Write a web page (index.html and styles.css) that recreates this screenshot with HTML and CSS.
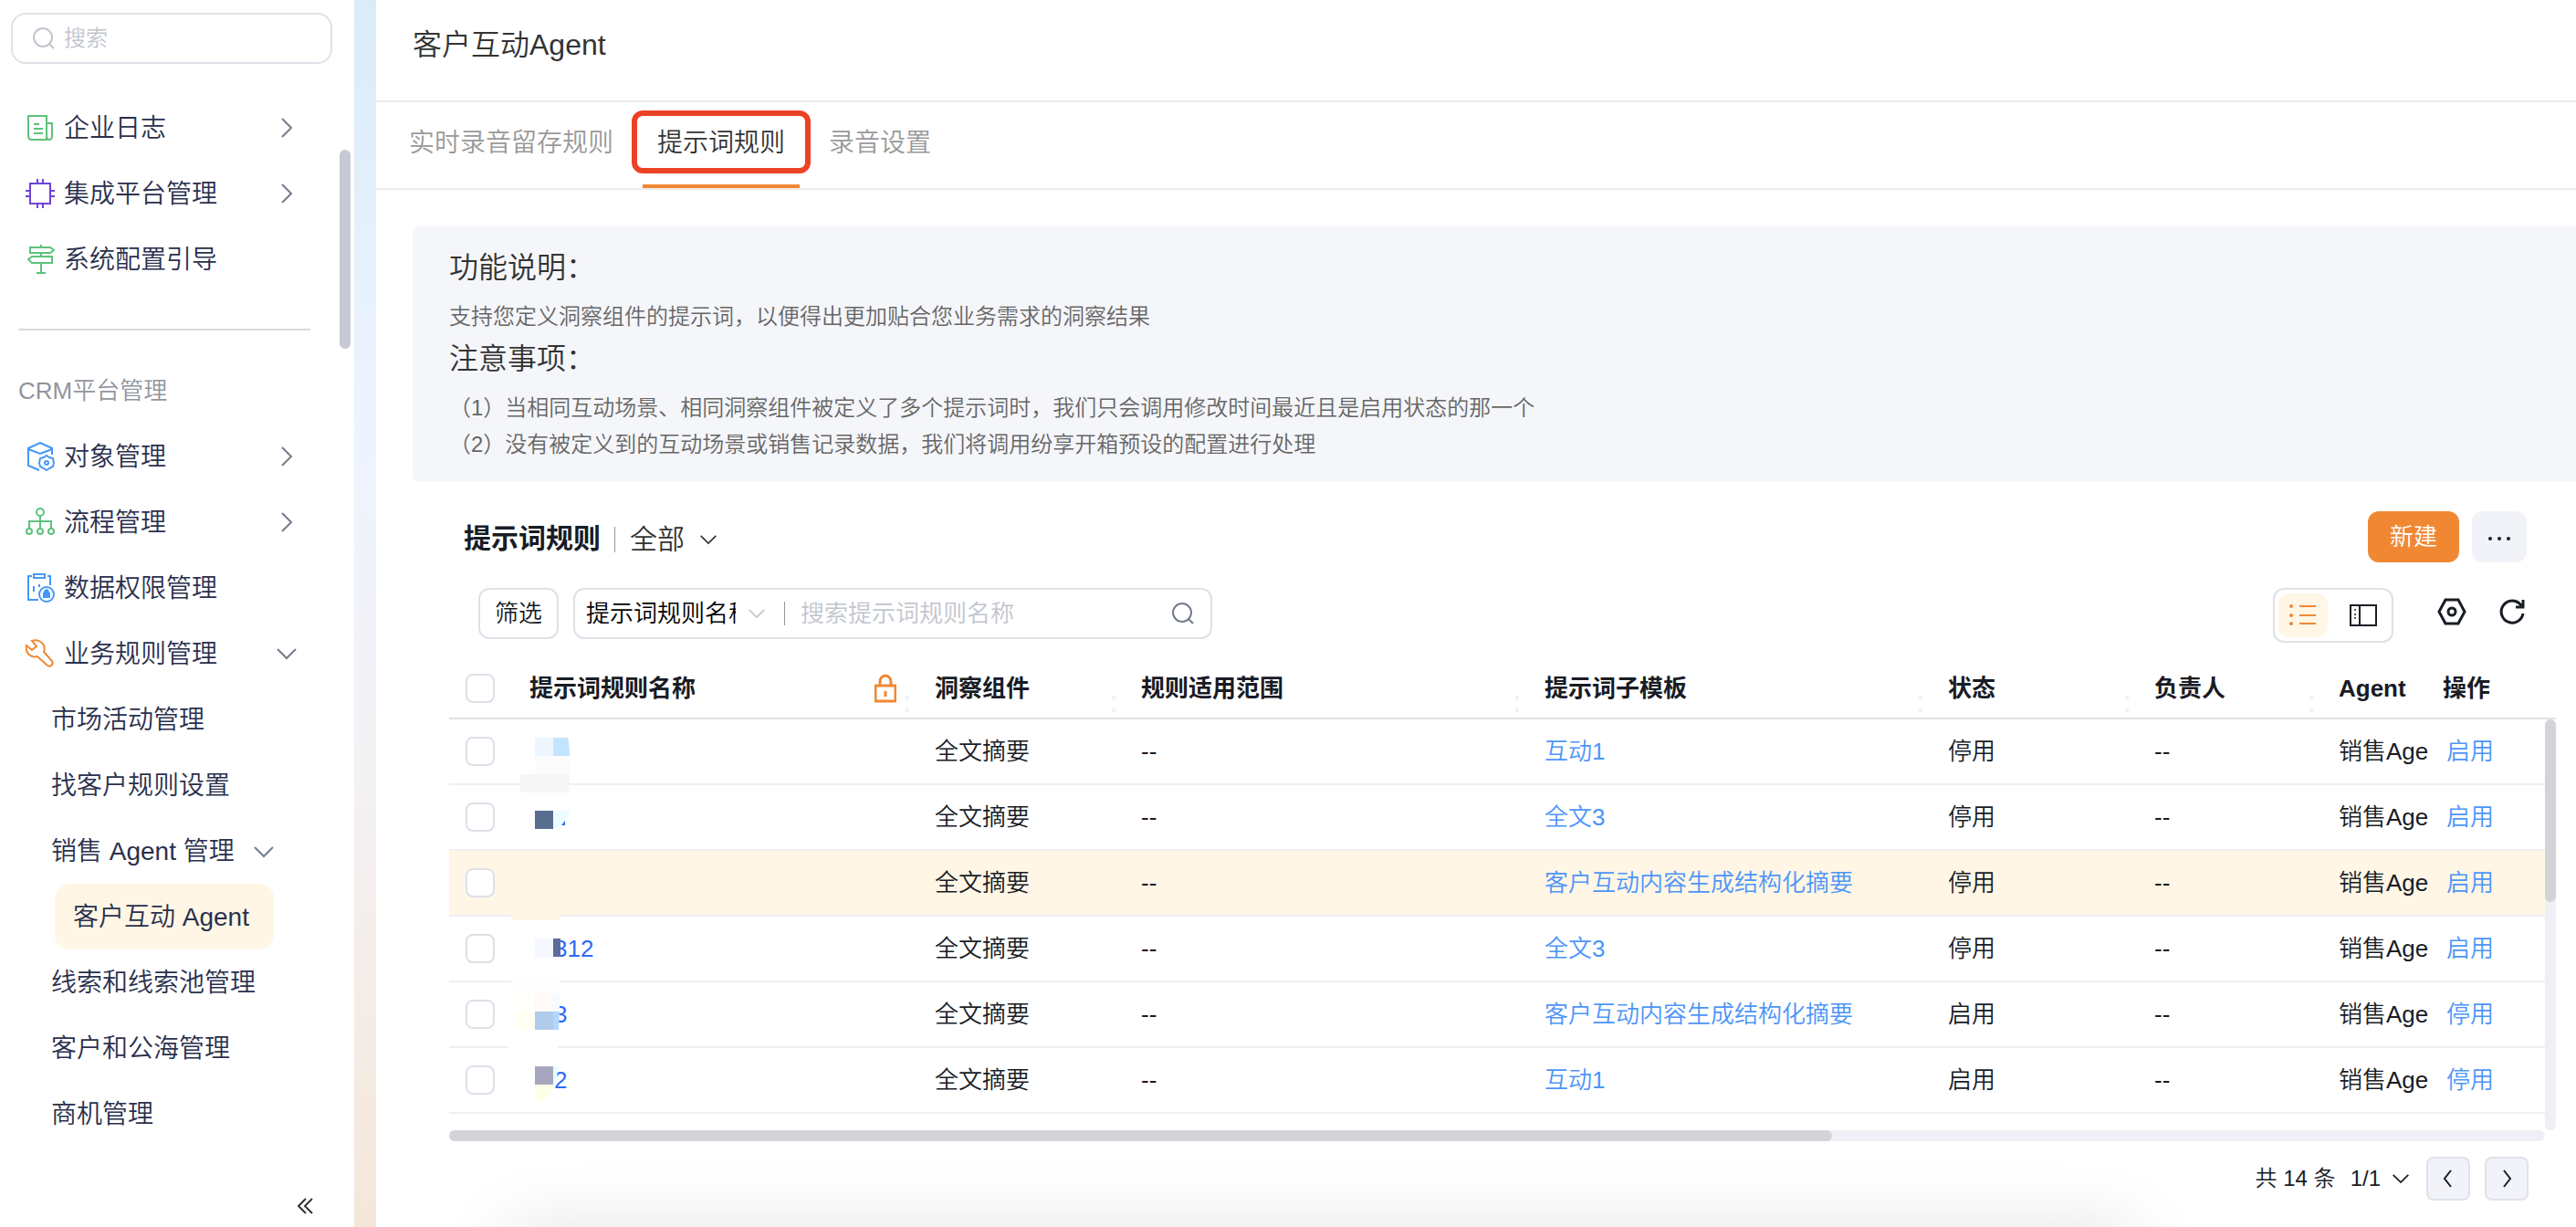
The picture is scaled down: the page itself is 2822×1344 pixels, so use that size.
FILE: index.html
```html
<!DOCTYPE html>
<html lang="zh-CN">
<head>
<meta charset="utf-8">
<meta name="viewport" content="width=device-width, initial-scale=1">
<title>客户互动Agent</title>
<link rel="stylesheet" href="styles.css">
</head>
<body>
<svg class="sprite" aria-hidden="true">
  <symbol id="i-right" viewBox="0 0 24 24"><path d="M7 2l10 10L7 22"/></symbol>
  <symbol id="i-down" viewBox="0 0 24 24"><path d="M2 7l10 10L22 7"/></symbol>
  <symbol id="i-search" viewBox="0 0 24 24"><circle cx="11" cy="11" r="10"/><path d="M18 18l5 5"/></symbol>
</svg>

<aside class="sidebar">
  <label class="side-search">
    <svg class="icon-24"><use href="#i-search"/></svg>
    <input type="search" placeholder="搜索" aria-label="搜索">
  </label>
  <nav class="menu">
    <a class="item" href="#">
      <svg class="menu-icon green" viewBox="0 0 32 32"><path d="M3 3h20v26H7q-4 0-4-4zM23 11h6v14q0 4-3 4t-3-4zM9 12h6M9 17h10M9 22h10"/></svg>
      <span>企业日志</span><svg class="arrow"><use href="#i-right"/></svg>
    </a>
    <a class="item" href="#">
      <svg class="menu-icon purple" viewBox="0 0 32 32"><path d="M5 5h22v22H5zM13 0v5M19 0v5M13 27v5M19 27v5M0 13h5M0 19h5M27 13h5M27 19h5"/></svg>
      <span>集成平台管理</span><svg class="arrow"><use href="#i-right"/></svg>
    </a>
    <a class="item" href="#">
      <svg class="menu-icon green" viewBox="0 0 32 32"><path d="M17 0v3M5 3h22l4 3-4 3H5zM17 9v4M29 13H7l-4 3 4 4h22zM17 20v11M12 31h10"/></svg>
      <span>系统配置引导</span>
    </a>
    <hr>
    <h2>CRM平台管理</h2>
    <a class="item" href="#">
      <svg class="menu-icon blue" viewBox="0 0 32 32"><path d="M29 14V7L16 1 3 7v19l12 5M3 8l13 5 13-5"/><path d="M23 15l3 2 4 1 1 5-1 4-4 2-3 2-3-2-4-2-1-4 1-5 4-1z"/><circle cx="23" cy="23" r="2"/></svg>
      <span>对象管理</span><svg class="arrow"><use href="#i-right"/></svg>
    </a>
    <a class="item" href="#">
      <svg class="menu-icon green" viewBox="0 0 32 32"><circle cx="16" cy="5" r="4"/><circle cx="4" cy="26" r="3"/><circle cx="16" cy="26" r="3"/><circle cx="28" cy="26" r="3"/><path d="M16 9v14M4 23v-8h24v8"/></svg>
      <span>流程管理</span><svg class="arrow"><use href="#i-right"/></svg>
    </a>
    <a class="item" href="#">
      <svg class="menu-icon blue" viewBox="0 0 32 32"><path d="M7 3H3v26h11M24 3h3v10M9 1h12v4H9zM9 14v6M15 12v3"/><circle cx="23" cy="23" r="8"/><path class="solid" d="M19 21h1c0-5 6-5 6 0h1v6h-8z"/></svg>
      <span>数据权限管理</span>
    </a>
    <a class="item" href="#">
      <svg class="menu-icon orange" viewBox="0 0 32 32"><path d="M7 2c8-3 16 4 13 12l9 10c2 4-2 7-5 5L13 19C6 21-1 15 1 7l6 5 5-4z"/></svg>
      <span>业务规则管理</span><svg class="arrow"><use href="#i-down"/></svg>
    </a>
    <a class="item sub" href="#">市场活动管理</a>
    <a class="item sub" href="#">找客户规则设置</a>
    <a class="item sub" href="#">销售 Agent 管理<svg class="arrow near"><use href="#i-down"/></svg></a>
    <a class="item current" href="#" aria-current="page">客户互动 Agent</a>
    <a class="item sub" href="#">线索和线索池管理</a>
    <a class="item sub" href="#">客户和公海管理</a>
    <a class="item sub" href="#">商机管理</a>
  </nav>
  <button class="collapse" type="button" aria-label="收起"><svg viewBox="0 0 18 18"><path d="M9 1L1 9l8 8M16 1L8 9l8 8"/></svg></button>
  <div class="side-thumb"></div>
</aside>
<div class="gutter"></div>

<main>
  <header class="title"><h1>客户互动Agent</h1></header>
  <nav class="tabs">
    <a href="#">实时录音留存规则</a>
    <a class="selected" href="#">提示词规则</a>
    <a href="#">录音设置</a>
  </nav>

  <section class="notice">
    <h3>功能说明：</h3>
    <p>支持您定义洞察组件的提示词，以便得出更加贴合您业务需求的洞察结果</p>
    <h3>注意事项：</h3>
    <p>（1）当相同互动场景、相同洞察组件被定义了多个提示词时，我们只会调用修改时间最近且是启用状态的那一个</p>
    <p>（2）没有被定义到的互动场景或销售记录数据，我们将调用纷享开箱预设的配置进行处理</p>
  </section>

  <section class="list">
    <div class="list-head">
      <h2>提示词规则</h2>
      <button class="view-pick" type="button">全部<svg class="icon-20"><use href="#i-down"/></svg></button>
      <div class="actions">
        <button class="primary" type="button">新建</button>
        <button class="more" type="button" aria-label="更多"><svg viewBox="0 0 24 4"><circle cx="2" cy="2" r="2"/><circle cx="12" cy="2" r="2"/><circle cx="22" cy="2" r="2"/></svg></button>
      </div>
    </div>

    <div class="toolbar">
      <button class="filter" type="button">筛选</button>
      <div class="search">
        <select aria-label="搜索字段"><option>提示词规则名称</option></select>
        <svg class="icon-20 pale"><use href="#i-down"/></svg>
        <input type="search" placeholder="搜索提示词规则名称" aria-label="搜索提示词规则名称">
        <svg class="icon-24"><use href="#i-search"/></svg>
      </div>
      <div class="tools">
        <div class="switch">
          <button class="on" type="button" aria-label="列表视图"><svg viewBox="0 0 30 24"><path d="M11 2h18M11 12h18M11 21h18"/><circle cx="2" cy="2" r="2"/><circle cx="2" cy="12" r="2"/><circle cx="2" cy="21" r="2"/></svg></button>
          <button type="button" aria-label="分栏视图"><svg viewBox="0 0 30 24"><path d="M1 1h28v22H1zM11 1v22"/><circle cx="6" cy="6" r="1"/><circle cx="6" cy="11" r="1"/><circle cx="6" cy="15" r="1"/></svg></button>
        </div>
        <button class="tool" type="button" aria-label="设置"><svg viewBox="0 0 32 32"><path d="M9 3h14l7 13-7 13H9L2 16z"/><circle cx="16" cy="16" r="4"/></svg></button>
        <button class="tool" type="button" aria-label="刷新"><svg viewBox="0 0 32 32"><path d="M28 18A12 12 0 1 1 24 7l4 4M28 3v8h-8"/></svg></button>
      </div>
    </div>

    <div class="table-box">
      <table>
        <colgroup><col class="c-check"><col class="c-name"><col class="c-mid"><col><col><col class="c-mid"><col class="c-owner"><col class="c-agent"><col class="c-act"></colgroup>
        <thead>
          <tr>
            <th class="check"><input type="checkbox" aria-label="全选"></th>
            <th class="sep"><div class="locked">提示词规则名称<svg viewBox="0 0 24 32"><path d="M1 13h22v17H1zM6 13V9a6 7 0 0 1 12 0v4M12 19v6"/></svg></div></th>
            <th class="sep">洞察组件</th><th class="sep">规则适用范围</th><th class="sep">提示词子模板</th><th class="sep">状态</th><th class="sep">负责人</th><th>Agent</th><th class="act">操作</th>
          </tr>
        </thead>
        <tbody>
          <tr><td class="check"><input type="checkbox" aria-label="选择第1行"></td><td></td><td>全文摘要</td><td>--</td><td><a href="#">互动1</a></td><td>停用</td><td>--</td><td>销售Age</td><td class="act"><a href="#">启用</a></td></tr>
          <tr><td class="check"><input type="checkbox" aria-label="选择第2行"></td><td></td><td>全文摘要</td><td>--</td><td><a href="#">全文3</a></td><td>停用</td><td>--</td><td>销售Age</td><td class="act"><a href="#">启用</a></td></tr>
          <tr class="hover"><td class="check"><input type="checkbox" aria-label="选择第3行"></td><td></td><td>全文摘要</td><td>--</td><td><a href="#">客户互动内容生成结构化摘要</a></td><td>停用</td><td>--</td><td>销售Age</td><td class="act"><a href="#">启用</a></td></tr>
          <tr><td class="check"><input type="checkbox" aria-label="选择第4行"></td><td class="name"><a href="#">312</a></td><td>全文摘要</td><td>--</td><td><a href="#">全文3</a></td><td>停用</td><td>--</td><td>销售Age</td><td class="act"><a href="#">启用</a></td></tr>
          <tr><td class="check"><input type="checkbox" aria-label="选择第5行"></td><td class="name"><a href="#">3</a></td><td>全文摘要</td><td>--</td><td><a href="#">客户互动内容生成结构化摘要</a></td><td>启用</td><td>--</td><td>销售Age</td><td class="act"><a href="#">停用</a></td></tr>
          <tr><td class="check"><input type="checkbox" aria-label="选择第6行"></td><td class="name"><a href="#">2</a></td><td>全文摘要</td><td>--</td><td><a href="#">互动1</a></td><td>启用</td><td>--</td><td>销售Age</td><td class="act"><a href="#">停用</a></td></tr>
        </tbody>
      </table>
      <svg class="mask" viewBox="0 0 80 432" aria-hidden="true">
        <path fill="#eef6ff" d="M34 20h20v20H34z"/><path fill="#c3e4ff" d="M54 20h16q2 8 2 20H54z"/>
        <path fill="#fcfcfc" d="M34 40h38v20H34z"/><path fill="#f6f6f6" d="M18 60h54v20H18z"/>
        <path fill="#576e90" d="M34 100h20v20H34z"/><path fill="#ebfcff" d="M54 100h18q-4 16-18 20z"/><path fill="#2f6bf5" d="M63 116l4-5v5z"/>
        <path fill="#fff6e6" d="M8 213h54v7H8z"/>
        <path fill="#f6f8ff" d="M34 240h20v20H34z"/><path fill="#5c6c9c" d="M54 240h8v20h-8z"/>
        <path fill="#fdfdfd" d="M8 280h53v20H8z"/><path fill="#fffffb" d="M13 300h21v20H13z"/><path fill="#fffff4" d="M13 320h21v20H13z"/>
        <path fill="#fff9f7" d="M34 300h20v20H34z"/><path fill="#f5fafc" d="M54 300h7v20h-7z"/><path fill="#b1cbea" d="M34 320h20v20H34z"/><path fill="#b0d7ff" d="M54 320h7l-1 20h-6z"/>
        <path fill="#fff" d="M5 355h54v10H5z"/>
        <path fill="#a6a7bf" d="M34 380h20v20H34z"/><path fill="#e0ffff" d="M54 380h5q0 12-3 20h-2z"/><path fill="#fdffe6" d="M34 400h21q-6 18-21 20z"/>
      </svg>
      <div class="v-track"><div class="v-thumb"></div></div>
      <div class="h-track"><div class="h-thumb"></div></div>
    </div>

    <footer class="pager">
      <span>共 14 条</span>
      <button class="page-pick" type="button">1/1<svg class="icon-20"><use href="#i-down"/></svg></button>
      <button class="step" type="button" aria-label="上一页"><svg viewBox="0 0 20 20"><path d="M13 1L6 10l7 9"/></svg></button>
      <button class="step" type="button" aria-label="下一页"><svg viewBox="0 0 20 20"><path d="M7 1l7 9-7 9"/></svg></button>
    </footer>
  </section>
</main>
</body>
</html>
```
FILE: styles.css
```css
* { box-sizing: border-box; }

body {
  display: flex;
  min-height: 100vh;
  margin: 0;
  background: #fff;
  color: #181c25;
  font: 350 26px/40px "Liberation Sans", "Noto Sans CJK SC", sans-serif;
}

h1, h2, h3, p { margin: 0; font-weight: 350; }
a { color: inherit; text-decoration: none; }
button, input, select { margin: 0; padding: 0; border: 0; background: none; color: inherit; font: inherit; }
svg { flex: none; fill: none; stroke: currentColor; stroke-width: 2; }
input[type="search"] { appearance: none; flex: 1; min-width: 0; outline: 0; }
::placeholder { color: #c1c5ce; opacity: 1; }

.sprite { position: absolute; width: 0; height: 0; }
.icon-20 { width: 20px; height: 20px; }
.icon-24 { width: 24px; height: 24px; }

/* Sidebar */
.sidebar {
  position: relative;
  display: flex;
  flex: none;
  flex-direction: column;
  width: 388px;
  padding: 14px 24px 12px 12px;
  color: #2a304d;
}

.side-search {
  display: flex;
  align-items: center;
  gap: 10px;
  height: 56px;
  padding: 0 22px;
  border: 2px solid #e0e1e8;
  border-radius: 16px;
  color: #c1c5ce;
  font-size: 24px;
}
.side-search input { height: 40px; }

.menu { margin-top: 34px; font-size: 28px; }
.item { display: flex; align-items: center; gap: 10px; height: 72px; padding: 0 38px 0 16px; }
.item span { padding-top: 2px; }
.menu-icon { width: 32px; height: 32px; }
.green { color: #5ec27b; }
.purple { color: #6f42d8; }
.blue { color: #4598f7; }
.orange { color: #f08833; }
.solid { fill: currentColor; stroke: none; }
.arrow { width: 24px; height: 24px; margin-left: auto; color: #737c8c; }
.near { margin-left: 10px; }
.sub { padding-top: 2px; padding-left: 44px; }
.current { width: 240px; margin-left: 48px; padding: 2px 20px 0; border-radius: 16px; background: #fff6e6; }
.menu hr { width: 320px; height: 2px; margin: 40px 8px 46px; border: 0; background: #d9d9dc; }
.menu h2 { margin: 0 8px 16px; color: #91959e; font-size: 26px; }

.collapse { align-self: flex-end; height: 22px; margin-top: auto; margin-right: 20px; line-height: 0; color: #333; }
.collapse svg { width: 18px; height: 18px; }
.side-thumb { position: absolute; top: 164px; right: 4px; width: 12px; height: 218px; border-radius: 6px; background: #c5cad4; }

.gutter { flex: none; width: 24px; background: linear-gradient(#d9ecf8, #eef4ff 36%, #f4f1f3 64%, #f4e7da); }

/* Main */
main { position: relative; flex: 1; min-width: 0; overflow: hidden; }
main::after {
  content: "";
  position: absolute;
  top: 100%;
  left: 6%;
  width: 74%;
  height: 80px;
  box-shadow: 0 0 80px rgba(0, 0, 0, .11);
}

.title { height: 112px; padding: 29px 40px; border-bottom: 2px solid #ededee; }
.title h1 { color: #333; font-size: 32px; }

.tabs { display: flex; gap: 16px; height: 96px; padding: 0 20px; border-bottom: 2px solid #ededee; color: #999; font-size: 28px; }
.tabs a { position: relative; padding: 0 16px; line-height: 90px; border-bottom: 4px solid transparent; }
.tabs .selected { border-color: #f08833; color: #333; }
.tabs .selected::before {
  content: "";
  position: absolute;
  inset: 9px -12px 12px;
  border: 6px solid #eb4226;
  border-radius: 12px;
}

.notice { margin: 40px 0 0 40px; padding: 23px 40px 21px; border-radius: 8px 0 0 8px; background: #f5f6fa; color: #666; font-size: 24px; }
.notice h3 { margin-bottom: 12px; color: #333; font-size: 32px; line-height: 44px; }
.notice p + h3 { margin-top: 4px; }

.list { padding: 32px 22px 0 80px; }

.list-head { display: flex; align-items: center; height: 56px; padding: 0 32px 0 16px; font-size: 30px; }
.list-head h2 { padding-top: 4px; font-size: 30px; font-weight: 700; }
.view-pick { display: flex; align-items: center; gap: 16px; margin-left: 15px; padding-top: 5px; color: #333; }
.view-pick::before { content: ""; width: 1px; height: 28px; background: #91959e; }
.actions { display: flex; gap: 14px; margin-left: auto; font-size: 26px; }
.actions button { height: 56px; border-radius: 12px; }
.primary { width: 100px; background: #f08833; color: #fff; }
.more { width: 60px; background: #f2f3f8; }
.more svg { width: 24px; height: 4px; fill: currentColor; stroke: none; vertical-align: middle; }

.toolbar { display: flex; align-items: flex-start; gap: 16px; height: 60px; margin-top: 28px; padding: 0 32px; }
.filter { width: 88px; height: 56px; border: 2px solid #e0e1e8; border-radius: 12px; }
.search { display: flex; align-items: center; width: 700px; height: 56px; padding: 0 18px 0 12px; border: 2px solid #e0e1e8; border-radius: 12px; color: #737c8c; }
.search select { appearance: none; width: 164px; height: 40px; overflow: hidden; color: #000; }
.search .pale { margin: 0 20px 0 13px; color: #c1c5ce; }
.search input { height: 26px; padding-left: 17px; border-left: 1px solid #91959e; color: #181c25; }
.tools { display: flex; align-items: flex-start; gap: 34px; margin-left: auto; }
.switch { display: flex; gap: 12px; width: 132px; height: 60px; margin-right: 14px; padding: 4px; border: 2px solid #e0e1e8; border-radius: 12px; }
.switch button { width: 56px; height: 48px; border-radius: 12px; line-height: 0; }
.switch svg { width: 30px; height: 24px; }
.switch circle { fill: currentColor; stroke: none; }
.switch .on { background: #fff6e6; color: #f08833; }
.tool { width: 32px; height: 52px; line-height: 0; }
.tool svg { width: 32px; height: 32px; stroke-width: 3; }

/* Table */
.table-box { position: relative; margin-top: 16px; padding-bottom: 30px; }
table { width: 100%; border-collapse: separate; border-spacing: 0; table-layout: fixed; }
.c-check { width: 60px; }
.c-name { width: 444px; }
.c-mid { width: 226px; }
.c-owner { width: 202px; }
.c-agent { width: 126px; }
.c-act { width: 140px; }
th, td { padding: 0 0 0 28px; overflow: hidden; text-align: left; white-space: nowrap; }
th { height: 68px; padding-top: 2px; border-bottom: 2px solid #dee0e6; font-weight: 700; }
td { height: 72px; border-bottom: 2px solid #eeeff4; }
.check { padding-left: 18px; line-height: 0; }
.act { padding-left: 16px; }
td.act { padding-left: 20px; }
.name { padding-left: 55px; }
td a { color: #4d95f8; }
.name a { color: #2f6bf5; }
.hover { background: #fff6e6; }
.sep { background: linear-gradient(#f0f1fa 4px, transparent 4px 14px, #f0f1fa 14px) right 0 bottom 6px / 4px 18px no-repeat; }
.locked { display: flex; justify-content: space-between; align-items: center; padding-right: 14px; }
.locked svg { width: 24px; height: 32px; color: #f08833; stroke-width: 3; }

input[type="checkbox"] { appearance: none; width: 32px; height: 32px; border: 2px solid #dee0e8; border-radius: 8px; background: #fff; }

.mask { position: absolute; top: 68px; left: 60px; width: 80px; height: 432px; stroke: none; }
.v-track { position: absolute; top: 68px; right: 0; bottom: 12px; width: 12px; border-radius: 6px; background: #eff0f5; }
.v-thumb { height: 200px; border-radius: 6px; background: #d3d4d8; }
.h-track { position: absolute; right: 12px; bottom: 0; left: 0; height: 12px; border-radius: 6px; background: #eff0f5; }
.h-thumb { width: 66%; height: 12px; border-radius: 6px; background: #d3d4d8; }

.pager { display: flex; align-items: center; height: 48px; margin-top: 17px; justify-content: flex-end; gap: 16px; padding-right: 30px; font-size: 24px; }
.page-pick { display: flex; align-items: center; gap: 12px; margin-right: 2px; }
.page-pick, .step { color: #181c25; }
.step { width: 48px; height: 48px; border: 2px solid #e0e1e8; border-radius: 8px; background: #f2f3f8; line-height: 0; }
.step svg { width: 20px; height: 20px; }
```
